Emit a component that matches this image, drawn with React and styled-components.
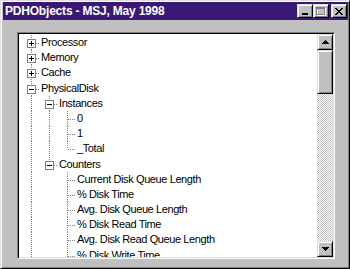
import React from 'react';
import styled, { createGlobalStyle } from 'styled-components';

const Global = createGlobalStyle`
  html, body { margin: 0; padding: 0; background: #c0c0c0; }
  body { width: 350px; height: 269px; overflow: hidden; }
`;

const LINE = '#808080';

const Window = styled.div`
  box-sizing: border-box;
  width: 350px;
  height: 269px;
  display: flex;
  flex-direction: column;
  background: #c0c0c0;
  border: 1px solid;
  border-color: #dfdfdf #000 #000 #dfdfdf;
  box-shadow: inset 1px 1px #fff, inset -1px -1px #808080;
  padding: 1px 1px 1px 2px;
`;

const TitleBar = styled.div`
  height: 18px;
  flex: none;
  display: flex;
  align-items: center;
  background: #3a1876;
  padding: 0 1px 0 2px;
`;

const Title = styled.div`
  flex: 1;
  color: #fff;
  font-family: "Liberation Sans", Arial, sans-serif;
  font-weight: bold;
  font-size: 12px;
  letter-spacing: -0.2px;
  white-space: nowrap;
  line-height: 18px;
`;

const raised = `
  box-sizing: border-box;
  background: #c0c0c0;
  border: 1px solid;
  border-color: #dfdfdf #000 #000 #dfdfdf;
  box-shadow: inset 1px 1px #fff, inset -1px -1px #808080;
`;

const CapButton = styled.div`
  ${raised}
  width: 16px;
  height: 14px;
  flex: none;
  margin-left: ${(p) => (p.$gap ? '2px' : '0')};
  display: flex;
  align-items: center;
  justify-content: center;
  svg { display: block; }
`;

const Client = styled.div`
  flex: 1;
  display: flex;
  padding: 12px 13px 8px 14px;
  min-height: 0;
`;

const TreeFrame = styled.div`
  box-sizing: border-box;
  flex: 1;
  display: flex;
  padding: 1px;
  border: 1px solid;
  border-color: #808080 #fff #fff #808080;
  box-shadow: inset 1px 1px #000, inset -1px -1px #dfdfdf;
  min-height: 0;
`;

const TreeList = styled.div`
  flex: 1;
  background: #fff;
  overflow: hidden;
  padding-top: 1px;
`;

const Row = styled.div`
  height: 15.2px;
  display: flex;
  align-items: stretch;
`;

const Gutter = styled.span`
  display: flex;
  flex: none;
  padding-left: 3px;
`;

const Guide = styled.svg`
  display: block;
  flex: none;
  height: 100%;
  overflow: visible;
`;

const Label = styled.span`
  padding-left: 2px;
  font-family: "Liberation Sans", Arial, sans-serif;
  font-size: 11px;
  letter-spacing: -0.4px;
  color: #000;
  line-height: 15.2px;
  white-space: nowrap;
`;

const ScrollBar = styled.div`
  width: 16px;
  flex: none;
  display: flex;
  flex-direction: column;
`;

const ScrollButton = styled.div`
  ${raised}
  width: 16px;
  height: 16px;
  flex: none;
  display: flex;
  align-items: center;
  justify-content: center;
  svg { display: block; }
`;

const Track = styled.div`
  flex: 1;
  display: flex;
  flex-direction: column;
  background-color: #fff;
  background-image: repeating-conic-gradient(#c0c0c0 0 25%, #fff 0 50%);
  background-size: 2px 2px;
`;

const Thumb = styled.div`
  ${raised}
  width: 16px;
  height: ${(p) => p.$size}px;
  flex: none;
`;

const dash = { stroke: LINE, strokeDasharray: '1 1', shapeRendering: 'crispEdges' };

function PassGuide({ on }) {
  return (
    <Guide width="18">
      {on && <line x1="9.5" y1="0" x2="9.5" y2="100%" {...dash} />}
    </Guide>
  );
}

function OwnGuide({ last, box }) {
  return (
    <Guide width="17">
      <line x1="9.5" y1="0" x2="9.5" y2={last ? '50%' : '100%'} {...dash} />
      <svg x="0" y="50%" overflow="visible">
        <line x1="10" y1="0.5" x2="17" y2="0.5" {...dash} />
        {box && (
          <g shapeRendering="crispEdges">
            <rect x="5.5" y="-3.5" width="8" height="8" fill="#fff" stroke={LINE} />
            <line x1="7" y1="0.5" x2="12" y2="0.5" stroke="#000" />
            {box === 'plus' && <line x1="9.5" y1="-2" x2="9.5" y2="3" stroke="#000" />}
          </g>
        )}
      </svg>
    </Guide>
  );
}

const rows = [
  { label: 'Processor', level: 0, box: 'plus', guides: [] },
  { label: 'Memory', level: 0, box: 'plus', guides: [] },
  { label: 'Cache', level: 0, box: 'plus', guides: [] },
  { label: 'PhysicalDisk', level: 0, box: 'minus', guides: [] },
  { label: 'Instances', level: 1, box: 'minus', guides: [true] },
  { label: '0', level: 2, guides: [true, true] },
  { label: '1', level: 2, guides: [true, true] },
  { label: '_Total', level: 2, guides: [true, true], last: true },
  { label: 'Counters', level: 1, box: 'minus', guides: [true], last: true },
  { label: 'Current Disk Queue Length', level: 2, guides: [true, false] },
  { label: '% Disk Time', level: 2, guides: [true, false] },
  { label: 'Avg. Disk Queue Length', level: 2, guides: [true, false] },
  { label: '% Disk Read Time', level: 2, guides: [true, false] },
  { label: 'Avg. Disk Read Queue Length', level: 2, guides: [true, false] },
  { label: '% Disk Write Time', level: 2, guides: [true, false] },
];

function TreeRow({ row }) {
  return (
    <Row>
      <Gutter>
        {row.guides.map((on, i) => (
          <PassGuide key={i} on={on} />
        ))}
        <OwnGuide last={row.last} box={row.box} />
      </Gutter>
      <Label>{row.label}</Label>
    </Row>
  );
}

export default function App() {
  return (
    <>
      <Global />
      <Window>
        <TitleBar>
          <Title>PDHObjects - MSJ, May 1998</Title>
          <CapButton>
            <svg width="8" height="7" shapeRendering="crispEdges">
              <rect x="1" y="5" width="6" height="2" fill="#000" />
            </svg>
          </CapButton>
          <CapButton>
            <svg width="10" height="9" shapeRendering="crispEdges">
              <rect x="1.5" y="1.5" width="8" height="7" fill="none" stroke="#fff" />
              <rect x="0.5" y="0.5" width="8" height="7" fill="none" stroke={LINE} />
              <line x1="1" y1="1.5" x2="8" y2="1.5" stroke={LINE} />
            </svg>
          </CapButton>
          <CapButton $gap>
            <svg width="8" height="7" shapeRendering="crispEdges">
              <path d="M0 0h2v1h-2zM6 0h2v1h-2zM1 1h2v1h-2zM5 1h2v1h-2zM2 2h4v1h-4zM3 3h2v1h-2zM2 4h4v1h-4zM1 5h2v1h-2zM5 5h2v1h-2zM0 6h2v1h-2zM6 6h2v1h-2z" fill="#000" />
            </svg>
          </CapButton>
        </TitleBar>
        <Client>
          <TreeFrame>
            <TreeList>
              {rows.map((r, i) => (
                <TreeRow key={i} row={r} />
              ))}
            </TreeList>
            <ScrollBar>
              <ScrollButton>
                <svg width="7" height="4" shapeRendering="crispEdges">
                  <path d="M3 0h1v1h1v1h1v1h1v1h-7v-1h1v-1h1v-1h1z" fill="#000" />
                </svg>
              </ScrollButton>
              <Track>
                <Thumb $size={44} />
              </Track>
              <ScrollButton>
                <svg width="7" height="4" shapeRendering="crispEdges">
                  <path d="M0 0h7v1h-1v1h-1v1h-1v1h-1v-1h-1v-1h-1v-1h-1z" fill="#000" />
                </svg>
              </ScrollButton>
            </ScrollBar>
          </TreeFrame>
        </Client>
      </Window>
    </>
  );
}
